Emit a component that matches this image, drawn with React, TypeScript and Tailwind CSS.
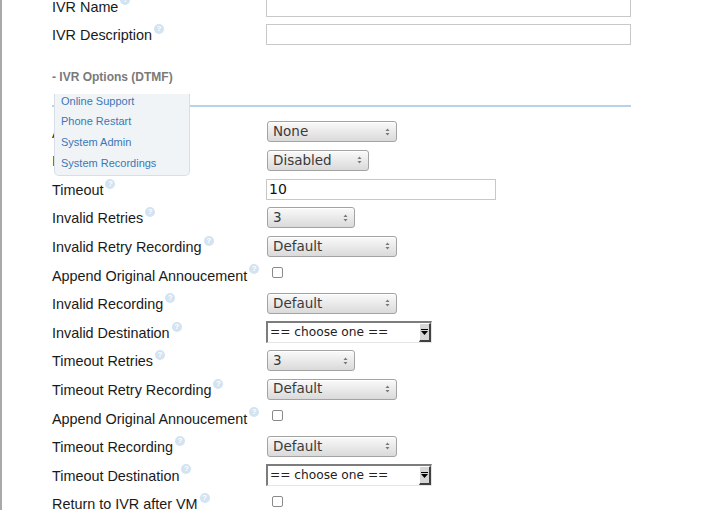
import React from "react";

const LABEL_FONT = { fontFamily: '"Liberation Sans", Arial, sans-serif' };
const CTRL_FONT = { fontFamily: '"DejaVu Sans", sans-serif' };

function Help() {
  return (
    <span className="relative -top-[7px] ml-[2px] inline-flex h-[10px] w-[10px] shrink-0 items-center justify-center rounded-full bg-[#d2e3f2] text-[8px] font-bold leading-none text-white">
      ?
    </span>
  );
}

function Row({ label, help = true, children }: { label: string; help?: boolean; children?: React.ReactNode }) {
  return (
    <div className="flex h-[28.6px] items-center">
      <div className="flex w-[214px] shrink-0 items-center pt-[3px] text-[14.4px] text-[#1a1a1a]" style={LABEL_FONT}>
        <span className="whitespace-nowrap">{label}</span>
        {help && <Help />}
      </div>
      <div className="flex items-center">{children}</div>
    </div>
  );
}

function TextInput({ width, value = "" }: { width: string; value?: string }) {
  return (
    <div
      className={`flex h-[21px] items-center border border-[#c8c8c8] bg-white pl-[2px] text-[14px] text-[#111] ${width}`}
      style={CTRL_FONT}
    >
      {value}
    </div>
  );
}

function Arrows() {
  return (
    <svg width="7" height="12" viewBox="0 0 7 12" className="shrink-0">
      <path d="M3.5 2.5 L5.5 5 L1.5 5 Z" fill="#777" />
      <path d="M3.5 9.5 L5.5 7 L1.5 7 Z" fill="#777" />
    </svg>
  );
}

function USelect({ width, value }: { width: string; value: string }) {
  return (
    <div
      className={`ml-[1px] flex h-[21px] items-center justify-between rounded-[3px] border border-[#a3a3a3] bg-gradient-to-b from-[#fafafa] to-[#dadada] pl-[5px] pr-[5px] text-[13.5px] text-[#3a3a3a] shadow-[inset_0_1px_0_#ffffff] ${width}`}
      style={CTRL_FONT}
    >
      <span className="leading-none">{value}</span>
      <Arrows />
    </div>
  );
}

function ChooseSelect() {
  return (
    <div className="flex h-[22px] w-[166px] border-l-2 border-t-2 border-b border-r border-l-[#7c7c7c] border-t-[#7c7c7c] border-b-[#e6e6e6] border-r-[#e6e6e6] bg-white">
      <div className="flex flex-1 items-center pl-[2px] text-[12.2px] text-[#222]" style={CTRL_FONT}>
        == choose one ==
      </div>
      <div className="flex w-[12px] items-center justify-center border-l border-t border-l-white border-t-white border-r-2 border-b-2 border-r-[#404040] border-b-[#404040] bg-[#d6d6d6]">
        <svg width="7" height="6" viewBox="0 0 7 6">
          <rect x="0" y="0" width="7" height="1" fill="#000" />
          <path d="M0 2 L7 2 L3.5 6 Z" fill="#000" />
        </svg>
      </div>
    </div>
  );
}

function Check() {
  return <div className="relative -top-[2px] ml-[6px] h-[11px] w-[11px] rounded-[2px] border border-[#8a8a8a] bg-white" />;
}

export default function App() {
  return (
    <div className="relative h-[510px] w-[721px] overflow-hidden border-l-2 border-[#a9a9a9] bg-white pl-[50px]">
      <div className="-mt-[8.3px] w-[579px]">
        <Row label="IVR Name" help>
          <TextInput width="w-[365px]" />
        </Row>
        <Row label="IVR Description">
          <TextInput width="w-[365px]" />
        </Row>

        <div className="mt-[20px] h-[16px] text-[12px] font-bold leading-[16px] text-[#7a7a7a]" style={LABEL_FONT}>
          - IVR Options (DTMF)
        </div>
        <div className="mt-[20px] h-[2px] bg-[#b9d1e7]" />

        <div className="mt-[10.7px]">
          <Row label="Announcement">
            <USelect width="w-[130px]" value="None" />
          </Row>
          <Row label="IVR Direct Dial">
            <USelect width="w-[102px]" value="Disabled" />
          </Row>
          <Row label="Timeout">
            <TextInput width="w-[230px]" value="10" />
          </Row>
          <Row label="Invalid Retries">
            <USelect width="w-[88px]" value="3" />
          </Row>
          <Row label="Invalid Retry Recording">
            <USelect width="w-[130px]" value="Default" />
          </Row>
          <Row label="Append Original Annoucement">
            <Check />
          </Row>
          <Row label="Invalid Recording">
            <USelect width="w-[130px]" value="Default" />
          </Row>
          <Row label="Invalid Destination">
            <ChooseSelect />
          </Row>
          <Row label="Timeout Retries">
            <USelect width="w-[88px]" value="3" />
          </Row>
          <Row label="Timeout Retry Recording">
            <USelect width="w-[130px]" value="Default" />
          </Row>
          <Row label="Append Original Annoucement">
            <Check />
          </Row>
          <Row label="Timeout Recording">
            <USelect width="w-[130px]" value="Default" />
          </Row>
          <Row label="Timeout Destination">
            <ChooseSelect />
          </Row>
          <Row label="Return to IVR after VM">
            <Check />
          </Row>
        </div>
      </div>

      <div className="absolute left-[52px] top-[94px] h-[82px] w-[136px] overflow-hidden rounded-b-[5px] border border-t-0 border-[#d6dee6] bg-[#f0f4f7]">
        <ul className="-mt-[3.3px] text-[11px] text-[#3b77b5]" style={LABEL_FONT}>
          <li className="flex h-[20.6px] items-center pl-[6px]">Online Support</li>
          <li className="flex h-[20.6px] items-center pl-[6px]">Phone Restart</li>
          <li className="flex h-[20.6px] items-center pl-[6px]">System Admin</li>
          <li className="flex h-[20.6px] items-center pl-[6px]">System Recordings</li>
        </ul>
      </div>
    </div>
  );
}
